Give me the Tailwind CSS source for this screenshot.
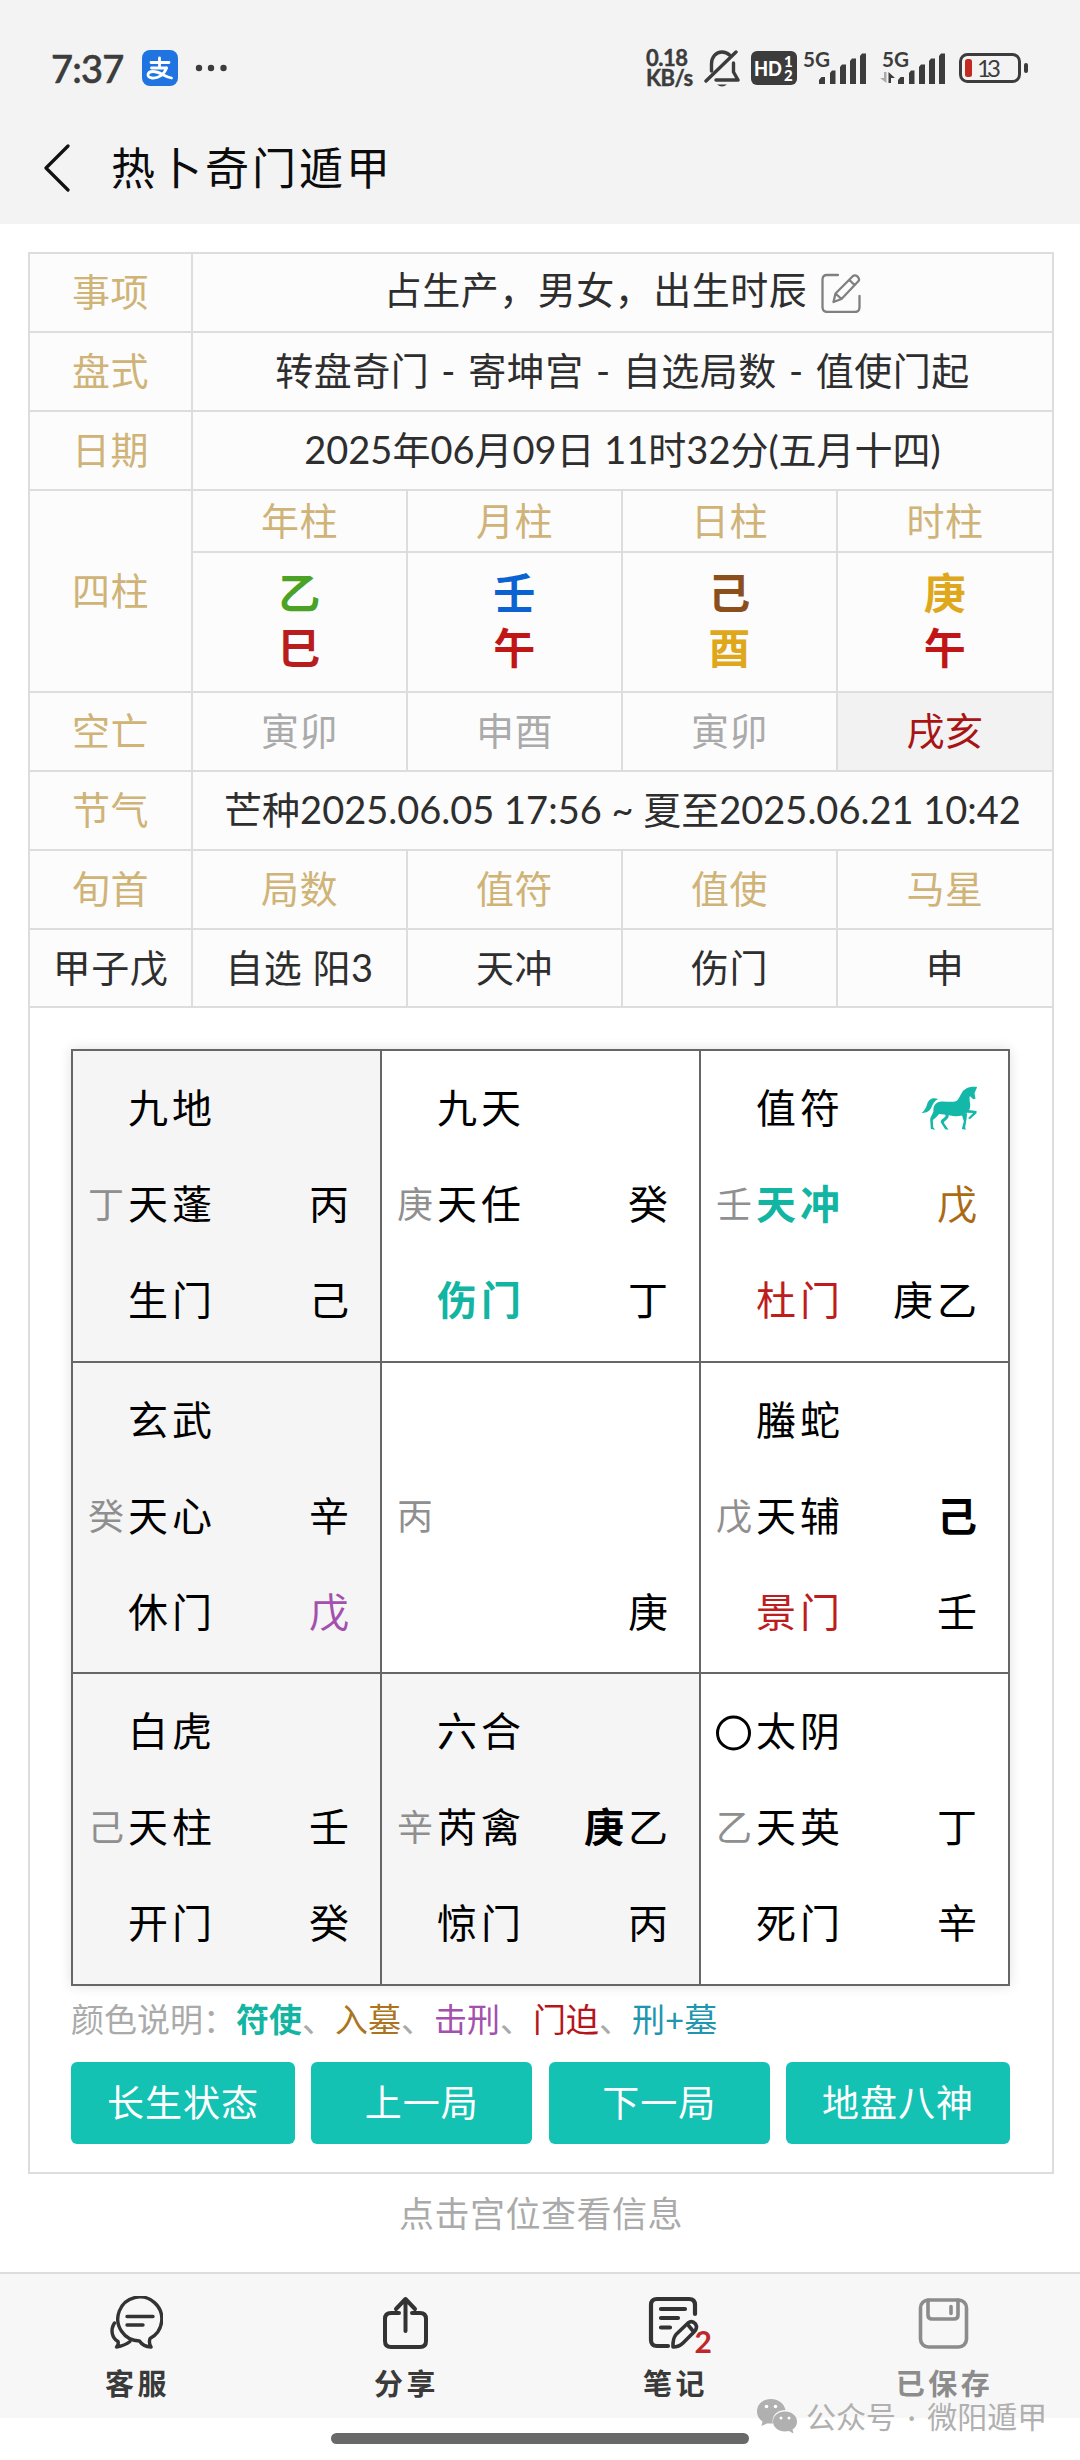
<!DOCTYPE html>
<html lang="zh-CN">
<head>
    <meta charset="UTF-8">
    <meta name="viewport" content="width=device-width, initial-scale=1.0">
    <title>热卜奇门遁甲</title>
    <script src="https://cdn.jsdelivr.net/npm/@tailwindcss/browser@4"></script>
</head>
<body class="bg-white">
<div class="w-[1080px] h-[2460px] flex flex-col overflow-hidden font-['Lato','Noto_Sans_CJK_SC',sans-serif] text-[#2e2e2e]">

    <!-- status bar + title -->
    <header class="h-[224px] shrink-0 bg-[#f3f3f3]">
        <div class="h-[136px] flex items-center pl-[51px] pr-[51px] text-[#3c3c3c]">
            <span class="w-[91px] text-[38px] leading-none tracking-[-0.8px] font-medium [-webkit-text-stroke:0.6px_#3c3c3c]">7:37</span>
            <svg class="w-9 h-9" viewBox="0 0 36 36">
                <rect width="36" height="36" rx="8" fill="#1f74e2"/>
                <g fill="none" stroke="#fff" stroke-width="2.8" stroke-linecap="round">
                    <path d="M9 12.500H27M17.500 8V18M9.500 18H24.500"/>
                    <path d="M24.500 18C22 25 16 28.500 10 28C4 27.500 5 21.500 11 21.500C18 21.500 22 26.500 29.500 28"/>
                </g>
            </svg>
            <svg class="w-8 h-2 ml-[17px]" viewBox="0 0 32 8" fill="currentColor"><circle cx="4" cy="4" r="3.200"/><circle cx="16" cy="4" r="3.200"/><circle cx="28.500" cy="4" r="3.200"/></svg>

            <div class="ml-auto flex items-center">
                <div class="w-[58px] text-[22px] leading-[20px] font-bold [-webkit-text-stroke:0.4px_#3c3c3c]">
                    <div class="tracking-[-0.5px]">0.18</div>
                    <div class="tracking-[-0.5px]">KB/s</div>
                </div>
                <svg class="w-[36px] h-[38px]" viewBox="0 0 36 38" fill="none" stroke="currentColor" stroke-width="3.400" stroke-linecap="round" stroke-linejoin="round">
                    <path d="M7.500 22V15C7.500 8 12 3 18 3C21 3 23.500 4 25.500 6M29.500 14V23L34 31H12"/>
                    <path d="M2 32L32 3"/>
                    <path d="M13 35.500H23Q18 39.500 13 35.500Z" fill="currentColor" stroke="none"/>
                </svg>
                <svg class="w-[46px] h-[34px] ml-[11px]" viewBox="0 0 46 34">
                    <rect width="46" height="34" rx="6" fill="#3c3c3c"/>
                    <g fill="#fff" font-family="Lato" font-weight="900">
                        <text x="3" y="24.500" font-size="20" textLength="28" lengthAdjust="spacingAndGlyphs">HD</text>
                        <text x="33" y="15.500" font-size="15">1</text>
                        <text x="33" y="30" font-size="15">2</text>
                    </g>
                </svg>
                <svg class="w-[64px] h-[34px] ml-[6px] overflow-visible" viewBox="0 0 64 34" fill="currentColor">
                    <text x="0" y="15.500" font-family="Lato" font-weight="700" font-size="21" textLength="27" lengthAdjust="spacingAndGlyphs">5G</text>
                    <path d="M16 33V29L18.500 26H22V33ZM27 33V22L29 19.500H32.500V33ZM37 33V16L39 13.500H43V33ZM47 33V10L49 7.500H53V33ZM57 33V5L59 2.500H63V33Z"/>
                </svg>
                <svg class="w-[66px] h-[34px] ml-[13px] overflow-visible" viewBox="0 0 66 34" fill="currentColor">
                    <text x="2" y="15.500" font-family="Lato" font-weight="700" font-size="21" textLength="27" lengthAdjust="spacingAndGlyphs">5G</text>
                    <path d="M18 33V29L20.500 26H24V33ZM29 33V22L31 19.500H34.500V33ZM39 33V16L41 13.500H45V33ZM49 33V10L51 7.500H55V33ZM59 33V5L61 2.500H65V33Z"/>
                    <path d="M4 21H6.500V32L0 27H4Z" fill="#aaa"/>
                    <path d="M8.500 32H11V27H15L8.500 21Z"/>
                </svg>
                <svg class="w-[70px] h-[30px] ml-[13px]" viewBox="0 0 70 30">
                    <rect x="1.500" y="1.500" width="59" height="27" rx="7" fill="none" stroke="#3c3c3c" stroke-width="3"/>
                    <rect x="65" y="10" width="4" height="10" rx="2" fill="#3c3c3c"/>
                    <rect x="6" y="6" width="7" height="18" rx="2.500" fill="#c32a22"/>
                    <text x="18" y="23.500" font-family="Lato" font-size="24" textLength="24" fill="#3c3c3c">13</text>
                </svg>
            </div>
        </div>
        <div class="h-[64px] flex items-center pl-[43px]">
            <svg class="w-[28px] h-[48px]" viewBox="0 0 28 48" fill="none" stroke="#111" stroke-width="3.200" stroke-linecap="round" stroke-linejoin="round"><path d="M25 2L3 24L25 46"/></svg>
            <h1 class="ml-[40px] text-[44px] leading-[64px] tracking-[3px] text-[#0c0c0c]">热卜奇门遁甲</h1>
        </div>
    </header>

    <main class="h-[2048px] shrink-0 pt-[28px] pl-[28px] pr-[26px] flex flex-col items-center">
        <section class="w-[1026px] h-[1922px] border-2 border-[#ddd]">
            <!-- info table -->
            <div class="grid grid-cols-[163px_215px_215px_215px_214px] grid-rows-[79px_79px_79px_62px_140px_79px_79px_79px_78px] bg-[#fcfcfc] text-[38px] leading-[1] tracking-[0.5px] text-center [&>div]:flex [&>div]:items-center [&>div]:justify-center [&>div]:pb-[3px] [&>div]:border-[#ddd] [&>div]:border-b-2 [&>div]:border-r-2">
                <div class="text-[#cfb377]">事项</div>
                <div class="col-span-4 border-r-0! pb-[7px]!">占生产，男女，出生时辰
                    <svg class="w-[40px] h-[40px] ml-[14px] mt-[7px]" viewBox="0 0 40 40" fill="none" stroke="#808080" stroke-width="2.300" stroke-linecap="round" stroke-linejoin="round">
                        <path d="M17 2H6Q1.500 2 1.500 6.500V34Q1.500 39 6.500 39H34Q38.500 39 38.500 34V23"/>
                        <path d="M12.500 29L14.500 20.500L32 3Q34 1.500 36.500 3.500Q39 6 37.500 8L20.500 26ZM28.500 7L33.500 12M14.500 20.500L20.500 26"/>
                    </svg>
                </div>
                <div class="text-[#cfb377]">盘式</div>
                <div class="col-span-4 border-r-0! [word-spacing:2px]">转盘奇门 - 寄坤宫 - 自选局数 - 值使门起</div>
                <div class="text-[#cfb377]">日期</div>
                <div class="col-span-4 border-r-0! tracking-normal">2025年06月09日 11时32分(五月十四)</div>

                <div class="row-span-2 text-[#cfb377]">四柱</div>
                <div class="text-[#cfb377]">年柱</div>
                <div class="text-[#cfb377]">月柱</div>
                <div class="text-[#cfb377]">日柱</div>
                <div class="text-[#cfb377] border-r-0!">时柱</div>
                <div class="flex-col text-[42px] leading-[55px] font-bold"><span class="text-[#4aa324]">乙</span><span class="text-[#b81c1c]">巳</span></div>
                <div class="flex-col text-[42px] leading-[55px] font-bold"><span class="text-[#0b63d1]">壬</span><span class="text-[#c01616]">午</span></div>
                <div class="flex-col text-[42px] leading-[55px] font-bold"><span class="text-[#8a4f1b]">己</span><span class="text-[#dfa81c]">酉</span></div>
                <div class="flex-col text-[42px] leading-[55px] font-bold border-r-0!"><span class="text-[#dfa81c]">庚</span><span class="text-[#c01616]">午</span></div>

                <div class="text-[#cfb377]">空亡</div>
                <div class="text-[#aaa]">寅卯</div>
                <div class="text-[#aaa]">申酉</div>
                <div class="text-[#aaa]">寅卯</div>
                <div class="bg-[#f2f2f2] text-[#a81414] border-r-0!">戌亥</div>
                <div class="text-[#cfb377]">节气</div>
                <div class="col-span-4 border-r-0! tracking-normal">芒种2025.06.05 17:56 ~ 夏至2025.06.21 10:42</div>

                <div class="text-[#cfb377]">旬首</div>
                <div class="text-[#cfb377]">局数</div>
                <div class="text-[#cfb377]">值符</div>
                <div class="text-[#cfb377]">值使</div>
                <div class="text-[#cfb377] border-r-0!">马星</div>
                <div>甲子戊</div>
                <div>自选 阳3</div>
                <div>天冲</div>
                <div>伤门</div>
                <div class="border-r-0!">申</div>
            </div>

            <!-- nine palaces -->
            <div class="mx-[41px] pt-[41px]">
                <div id="gong" class="w-[939px] grid grid-cols-[309px_319px_307px] grid-rows-[312px_311px_310px] border-2 border-[#666] bg-white shadow-[0_0_12px_rgba(0,0,0,0.12)] text-[40px] leading-[96px] tracking-[4px] text-black"></div>

                <p class="mt-[9px] text-[33px] leading-[48px] text-[#aaa] whitespace-nowrap">颜色说明：<b class="text-[#12b5a2]">符使</b>、<span class="text-[#ab7420]">入墓</span>、<span class="text-[#a350ae]">击刑</span>、<span class="text-[#b5161c]">门迫</span>、<span class="text-[#2295ae]">刑+墓</span></p>

                <div class="mt-[19px] w-[939px] grid grid-cols-[224px_221px_221px_224px] justify-between text-[37px] leading-[82px] tracking-[1px] text-center text-white">
                    <button class="h-[82px] rounded-md bg-[#13c2b3]">长生状态</button>
                    <button class="h-[82px] rounded-md bg-[#13c2b3]">上一局</button>
                    <button class="h-[82px] rounded-md bg-[#13c2b3]">下一局</button>
                    <button class="h-[82px] rounded-md bg-[#13c2b3]">地盘八神</button>
                </div>
            </div>
        </section>
        <p class="mt-[13px] text-[35px] leading-[52px] tracking-[0.5px] text-[#aaa]">点击宫位查看信息</p>
    </main>

    <!-- bottom tabs -->
    <footer class="relative h-[188px] shrink-0 border-t-2 border-[#ddd]">
        <nav class="h-[144px] pl-px pr-[3px] bg-[#f7f7f7] grid grid-cols-4 text-[29px] leading-[36px] tracking-[3.5px] font-bold text-[#3a3a3a]">
            <div class="flex flex-col items-center pt-[22px]">
                <svg class="w-[54px] h-[54px]" viewBox="0 0 54 54" fill="none" stroke="#333" stroke-width="3.400" stroke-linecap="round" stroke-linejoin="round">
                    <path d="M30.500 45A22 22 0 1 1 41 42.500Q39.500 47 42 51Q34 50.500 30.500 45Z"/>
                    <path d="M18 20.500H44M18 29H34"/>
                    <path d="M5.500 27C1 34 3 42 9 45.500Q10 48 7.500 51Q16 49.500 21 45.500"/>
                </svg>
                <span class="mt-[16px] -mr-1">客服</span>
            </div>
            <div class="flex flex-col items-center pt-[22px]">
                <svg class="w-[54px] h-[54px]" viewBox="0 0 54 54" fill="none" stroke="#333" stroke-width="4" stroke-linecap="round" stroke-linejoin="round">
                    <path d="M21 17H13Q7 17 7 23V45Q7 51 13 51H42Q48 51 48 45V23Q48 17 42 17H34"/>
                    <path d="M27.500 35V3M18 13L27.500 3L37 13"/>
                </svg>
                <span class="mt-[16px] -mr-1">分享</span>
            </div>
            <div class="flex flex-col items-center pt-[22px]">
                <div class="relative w-[54px] h-[54px]">
                    <svg class="w-[54px] h-[54px]" viewBox="0 0 54 54" fill="none" stroke="#333" stroke-width="4.200" stroke-linecap="round" stroke-linejoin="round">
                        <path d="M21 50H10Q4 50 4 44V9Q4 3 10 3H42Q48 3 48 9V18"/>
                        <path d="M14 13H38M14 22H31M14 31.500H23"/>
                        <path d="M26 51Q25.500 43 29 38.500L41 27Q45 24 48.500 28Q51 32 47 36L36 47Q32 51 26 51ZM41.500 29.500L46 35" stroke-width="3.600"/>
                    </svg>
                    <span class="absolute left-[48px] top-[27px] text-[30px] leading-[36px] tracking-normal text-[#c0272d]">2</span>
                </div>
                <span class="mt-[16px] -mr-1">笔记</span>
            </div>
            <div class="flex flex-col items-center pt-[22px] text-[#8c8c8c]">
                <svg class="w-[54px] h-[54px]" viewBox="0 0 54 54" fill="none" stroke="#8c8c8c" stroke-width="3.600" stroke-linecap="round" stroke-linejoin="round">
                    <rect x="4.500" y="4" width="46" height="47" rx="8"/>
                    <path d="M12 4V19Q12 23 16 23H38Q42 23 42 19V4M35 10.500V17.500"/>
                </svg>
                <span class="mt-[16px] -mr-1">已保存</span>
            </div>
        </nav>
        <div class="w-[418px] h-[11px] mt-[15px] ml-[331px] rounded-full bg-[#696969]"></div>
        <!-- account mark over the bar -->
        <div class="absolute left-[756px] top-[118px] h-[48px] flex items-center text-[#b0b0b0]">
            <svg class="w-[42px] h-[36px]" viewBox="0 0 42 36" fill="#b0b0b0">
                <path d="M15 1C6 1 1 7 1 13.500C1 18 3 21 6.500 23.500L5.500 28L11 25.500H17C15 18 21 12 29.500 12C28 5 22 1 15 1Z"/>
                <path d="M29 13.500C22 13.500 17 18 17 23.500C17 29 22 33.500 29 33.500L33 33L37.500 35.500L36.500 31.500C39.500 29.500 41 27 41 23.500C41 18 36 13.500 29 13.500Z"/>
                <g fill="#fff"><circle cx="10.500" cy="8.500" r="1.800"/><circle cx="19.500" cy="8.500" r="1.800"/><circle cx="25" cy="20" r="1.500"/><circle cx="33" cy="20" r="1.500"/></g>
            </svg>
            <span class="ml-[8px] text-[30px] leading-[48px] [word-spacing:4px] whitespace-pre">公众号 · 微阳遁甲</span>
        </div>
    </footer>
</div>

<script>
    const horse = `<svg class="w-[57px] h-[45px] mr-[3px]" viewBox="690 150 170 135" fill="#13b8a8">
        <path d="M858 153C838 151 822 155 812 170C806 180 802 192 794 196C776 201 752 192 738 200C728 206 726 216 728 224C734 236 764 234 786 240C800 242 812 240 822 234C834 228 838 216 837 204C836 196 834 188 836 180L846 190L853 188L850 172Z"/>
        <path d="M741 189C724 182 712 190 708 204C705 216 700 224 691 231C704 232 716 226 721 214C725 203 730 194 741 189Z"/>
        <path d="M728 218C728 230 720 238 717 248L719 279L732 281L726 274L725 252C736 244 744 236 748 226Z"/>
        <path d="M758 230C764 236 766 240 758 246C748 252 746 258 752 264L762 280L772 281L758 260C758 254 776 248 772 236Z"/>
        <path d="M812 236L818 256L812 279L824 281L822 274L826 250L828 232Z"/>
        <path d="M832 222L856 225V232L836 250L831 246L846 231L828 230Z"/>
    </svg>`;
    const ring = '<svg class="w-[36px] h-[36px] mt-[3px]" viewBox="0 0 36 36"><circle cx="17.5" cy="18" r="16" fill="none" stroke="#000" stroke-width="3"/></svg>';

    // each palace: shade, then three rows of [hidden stem, name, right side]
    const palaces = [
        [1, ['', '九地', ''], ['丁', '天蓬', '丙'], ['', '生门', '己']],
        [0, ['', '九天', ''], ['庚', '天任', '癸'], ['', '<b class="text-[#12b5a2]">伤门</b>', '丁']],
        [0, ['', '值符', horse], ['壬', '<b class="text-[#12b5a2]">天冲</b>', '<span class="text-[#ab6a14]">戊</span>'], ['', '<span class="text-[#bd1d1d]">杜门</span>', '庚乙']],
        [1, ['', '玄武', ''], ['癸', '天心', '辛'], ['', '休门', '<span class="text-[#a350ae]">戊</span>']],
        [0, ['', '', ''], ['丙', '', ''], ['', '', '庚']],
        [0, ['', '螣蛇', ''], ['戊', '天辅', '<b>己</b>'], ['', '<span class="text-[#bd1d1d]">景门</span>', '壬']],
        [1, ['', '白虎', ''], ['己', '天柱', '壬'], ['', '开门', '癸']],
        [1, ['', '六合', ''], ['辛', '芮禽', '<b>庚</b>乙'], ['', '惊门', '丙']],
        [0, [ring, '太阴', ''], ['乙', '天英', '丁'], ['', '死门', '辛']],
    ];

    document.getElementById('gong').innerHTML = palaces.map(([shade, ...rows], n) => `
        <div class="pt-[9px] pl-[15px] pr-[27px] border-[#666] ${n % 3 < 2 ? 'border-r-2' : ''} ${n < 6 ? 'border-b-2' : ''} ${shade ? 'bg-[#f5f5f5]' : 'bg-white'}">
            ${rows.map(([stem, name, right]) => `
            <div class="h-[96px] flex items-center">
                <span class="w-[40px] shrink-0 flex items-center text-[36px] tracking-normal text-[#8f8f8f]">${stem}</span>
                <span>${name}</span>
                <span class="ml-auto">${right}</span>
            </div>`).join('')}
        </div>`).join('');
</script>
</body>
</html>
